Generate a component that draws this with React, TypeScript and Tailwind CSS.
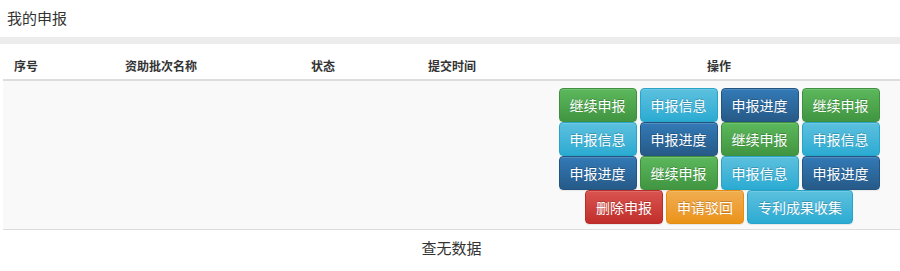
import React from "react";

type Variant = "success" | "info" | "primary" | "danger" | "warning";

const variantClass: Record<Variant, string> = {
  success: "bg-linear-to-b from-[#5cb85c] to-[#419641] border-[#3e8f3e]",
  info: "bg-linear-to-b from-[#5bc0de] to-[#2aabd2] border-[#28a4c9]",
  primary: "bg-linear-to-b from-[#337ab7] to-[#265a88] border-[#245580]",
  danger: "bg-linear-to-b from-[#d9534f] to-[#c12e2a] border-[#b92c28]",
  warning: "bg-linear-to-b from-[#f0ad4e] to-[#eb9316] border-[#e38d13]",
};

const labels: Record<string, Variant> = {
  继续申报: "success",
  申报信息: "info",
  申报进度: "primary",
};

// 操作按钮
const buttonRows: [string, Variant][][] = [
  ["继续申报", "申报信息", "申报进度", "继续申报"].map((t) => [t, labels[t]]),
  ["申报信息", "申报进度", "继续申报", "申报信息"].map((t) => [t, labels[t]]),
  ["申报进度", "继续申报", "申报信息", "申报进度"].map((t) => [t, labels[t]]),
  [
    ["删除申报", "danger"],
    ["申请驳回", "warning"],
    ["专利成果收集", "info"],
  ],
];

function Btn({ label, variant }: { label: string; variant: Variant }) {
  return (
    <button
      type="button"
      className={`h-[34px] px-[10px] border rounded-[4px] text-[14px] leading-[20px] text-white whitespace-nowrap [text-shadow:0_-1px_0_rgba(0,0,0,0.2)] shadow-[inset_0_1px_0_rgba(255,255,255,0.15),0_1px_1px_rgba(0,0,0,0.075)] ${variantClass[variant]}`}
    >
      {label}
    </button>
  );
}

const headers = ["序号", "资助批次名称", "状态", "提交时间"];

export default function App() {
  return (
    <div className="w-[900px] h-[271px] bg-white text-[#333] font-['Noto_Sans_CJK_SC','Noto_Sans',sans-serif] overflow-hidden">
      {/* ─── Title ─── */}
      <div className="h-[37px] px-[7px] flex items-center text-[15px]">我的申报</div>
      <div className="h-[7px] bg-[#ececec]" />

      {/* ─── Table ─── */}
      <div className="pl-[3px]">
        <div className="grid grid-cols-[111px_186px_117px_121px_1fr] h-[37px] border-b-2 border-[#ddd] text-[12px] font-bold leading-[17px] pt-[13px]">
          {headers.map((h) => (
            <div key={h} className="pl-[11px]">
              {h}
            </div>
          ))}
          <div className="text-center">操作</div>
        </div>

        <div className="grid grid-cols-[111px_186px_117px_121px_1fr] bg-[#f9f9f9] border-b border-[#ddd] pt-[7px] pb-[5px]">
          <div />
          <div />
          <div />
          <div />
          <div className="flex flex-col items-center">
            {buttonRows.map((row, i) => (
              <div key={i} className="flex gap-[3px]">
                {row.map(([label, v], j) => (
                  <Btn key={j} label={label} variant={v} />
                ))}
              </div>
            ))}
          </div>
        </div>

        <div className="h-[36px] flex items-center justify-center text-[15px]">查无数据</div>
      </div>
    </div>
  );
}
